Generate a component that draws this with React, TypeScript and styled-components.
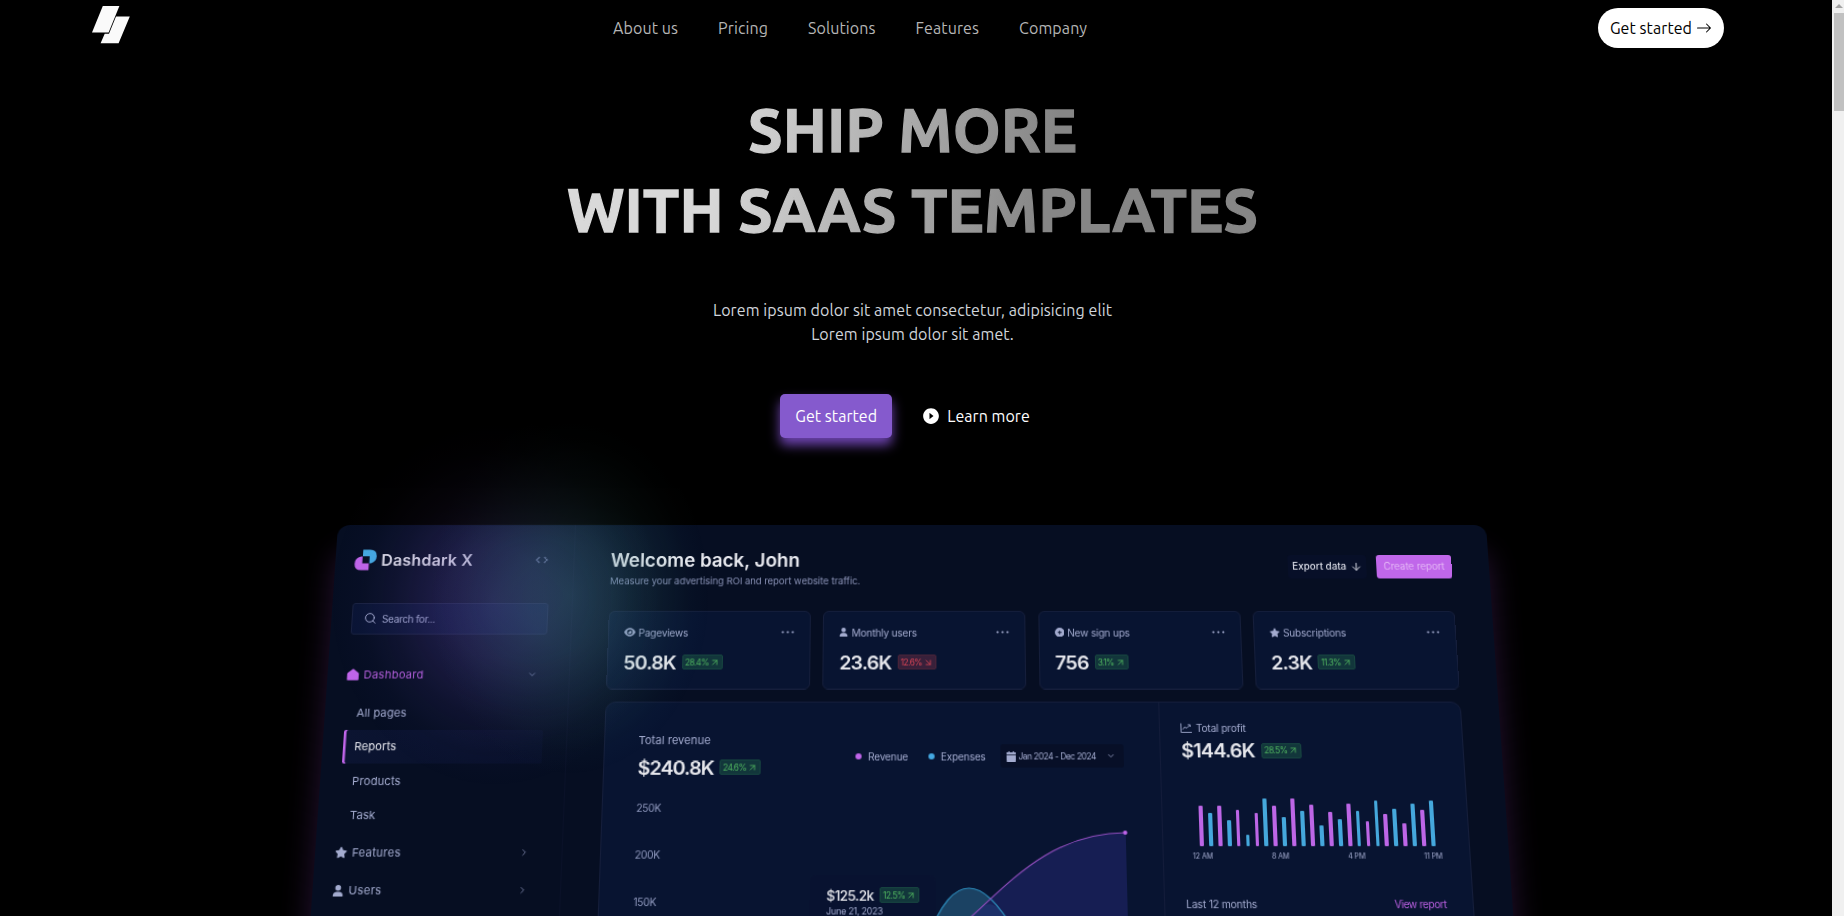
import React from 'react';
import styled, { createGlobalStyle, css } from 'styled-components';
import { BsArrowRight } from 'react-icons/bs';
import { AiFillPlayCircle } from 'react-icons/ai';
import {
  FaStar,
  FaUser,
  FaEye,
  FaCirclePlus,
} from 'react-icons/fa6';
import { Search, ChevronDown, ChevronRight, ArrowDown, ArrowUpRight, ArrowDownRight } from 'lucide-react';

const GlobalStyle = createGlobalStyle`
  * { box-sizing: border-box; }
  html, body { margin: 0; background: #000; overflow: hidden; }
  body { font-family: Ubuntu, "Noto Sans", sans-serif; font-size: 16px; line-height: 24px; color: #fff; }
  h1, h2, p { margin: 0; }
  svg { display: block; flex: none; }
`;

const Screen = styled.div`
  display: flex;
  height: 916px;
  overflow: hidden;
`;

const Page = styled.div`
  position: relative;
  width: 1832px;
  height: 916px;
  overflow: hidden;
  background: #000;
`;

const ScrollTrack = styled.div`
  flex: 1;
  display: flex;
  flex-direction: column;
  align-items: flex-end;
  background: #f0f0f0;
`;

const ScrollArrow = styled.svg`
  margin: 4px 1px 3px 0;
`;

const ScrollThumb = styled.div`
  width: 10px;
  height: 98px;
  margin-top: 1px;
  background: #c1c1c1;
`;

/* ---------- navigation ---------- */

const Nav = styled.nav`
  display: grid;
  grid-template-columns: 521px 1fr auto;
  align-items: center;
  height: 56px;
  padding: 0 108px 0 92px;
`;

const LogoMark = styled.svg`
  margin-top: -7px;
`;

const NavLinks = styled.div`
  display: flex;
  gap: 40px;
  color: #b5b5b5;
  letter-spacing: 0.1px;
`;

const PillButton = styled.button`
  display: flex;
  align-items: center;
  justify-content: center;
  gap: 4px;
  width: 126px;
  height: 40px;
  padding: 0;
  border: 0;
  border-radius: 20px;
  background: #fff;
  color: #000;
  font: inherit;
  letter-spacing: 0.07px;
  white-space: nowrap;
`;

/* ---------- hero ---------- */

const Hero = styled.header`
  display: flex;
  flex-direction: column;
  align-items: center;
  padding: 34px 7px 0 0;
  text-align: center;
`;

const Headline = styled.h1`
  font-size: 61px;
  font-weight: 700;
  line-height: 80px;
  background: linear-gradient(100deg, #d9d9d9 22%, #868686 69%);
  background-clip: text;
  -webkit-background-clip: text;
  -webkit-text-stroke: 1.3px transparent;
  color: transparent;
`;

const Lead = styled.p`
  margin-top: 48px;
  color: #d1d5db;
  letter-spacing: 0.075px;
`;

const Actions = styled.div`
  display: flex;
  align-items: center;
  gap: 30px;
  margin: 48px 0 0 -15px;
  letter-spacing: 0.05px;
`;

const PrimaryButton = styled.button`
  width: 112px;
  height: 44px;
  padding: 0;
  border: 0;
  border-radius: 5px;
  background: #855acd;
  color: #fff;
  font: inherit;
  letter-spacing: inherit;
  box-shadow: 0 7px 12px #8a55dccc;
`;

const LearnMore = styled.span`
  display: flex;
  align-items: center;
  gap: 7px;
`;

/* ---------- tilted dashboard ---------- */

const Stage = styled.section`
  width: 1148px;
  height: 391px;
  margin: 87px 0 0 338px;
`;

const Board = styled.div`
  display: flex;
  width: 1148px;
  height: 900px;
  border-radius: 12px;
  background: #060e22;
  box-shadow: 0 28px 30px #5e2d8066;
  color: #a3abcf;
  font-family: Inter, "Noto Sans", sans-serif;
  font-size: 11px;
  line-height: 14px;
  transform: perspective(2200px) rotateX(15deg);
  transform-origin: 50% 0;
`;

const Sidebar = styled.aside`
  width: 238px;
  padding: 23.5px 23px 0 20px;
  border-right: 1px solid #0a1128;
  border-radius: 12px 0 0 0;
`;

const BrandRow = styled.div`
  display: flex;
  align-items: center;
  height: 24px;
  margin: 0 2px 0 -1px;
`;

const BrandName = styled.span`
  flex: 1;
  margin-left: 4.5px;
  color: #dcdde6;
  font-size: 16px;
  font-weight: 600;
  letter-spacing: 0.18px;
`;

const SearchBox = styled.div`
  display: flex;
  align-items: center;
  gap: 5px;
  height: 32.5px;
  margin-top: 32px;
  padding-left: 11px;
  border: 1px solid #18213f;
  border-radius: 3px;
  background: #091433;
  font-size: 10px;
  letter-spacing: -0.35px;
`;

const MenuRow = styled.div<{ $active?: boolean; $top: number }>`
  display: flex;
  align-items: center;
  gap: 4.5px;
  height: 30px;
  margin-top: ${(p) => p.$top}px;
  margin-left: -1px;
  padding-right: 8.5px;
  color: ${(p) => (p.$active ? '#b55fdc' : '#a3abcf')};
  letter-spacing: 0.25px;

  & > span { flex: 1; }
  & > svg:last-child { color: #7d86ab; }
`;

const SubMenu = styled.div`
  display: flex;
  flex-direction: column;
  gap: 0.8px;
  margin-top: 7px;
`;

const SubItem = styled.div<{ $active?: boolean }>`
  display: flex;
  align-items: center;
  height: 32.4px;
  padding-left: 11px;
  letter-spacing: 0.1px;
  ${(p) =>
    p.$active &&
    css`
      background: linear-gradient(90deg, #0b1431, #081029);
      box-shadow: inset 2.5px 0 0 #c065ea;
      border-radius: 2px;
      color: #e6e7ee;
    `}
`;

const Main = styled.main`
  flex: 1;
  padding: 0 37px 0 36px;
`;

const TopBar = styled.div`
  display: flex;
  justify-content: space-between;
  height: 88px;
`;

const Greeting = styled.div`
  padding-top: 25.5px;
`;

const Title = styled.h2`
  color: #e9eaf0;
  font-size: 18.7px;
  font-weight: 600;
  line-height: 22px;
`;

const Subtitle = styled.p`
  margin-top: 3.5px;
  color: #8890b4;
  font-size: 9.6px;
  letter-spacing: -0.1px;
`;

const TopActions = styled.div`
  display: flex;
  gap: 10px;
  padding-top: 31px;
`;

const BoardButton = styled.span<{ $accent?: boolean }>`
  display: flex;
  align-items: center;
  justify-content: center;
  gap: 3.5px;
  width: ${(p) => (p.$accent ? 75 : 78)}px;
  height: 23.5px;
  border-radius: 3px;
  background: ${(p) => (p.$accent ? '#c067ea' : '#070f28')};
  color: ${(p) => (p.$accent ? '#ecc9f8' : '#dcdee8')};
  font-size: 9.8px;
  font-weight: ${(p) => (p.$accent ? 300 : 500)};
`;

const Cards = styled.div`
  display: grid;
  grid-template-columns: repeat(4, 1fr);
  gap: 12.5px;
`;

const Card = styled.div`
  height: 78.5px;
  padding: 13.5px 15px 0;
  border: 1px solid #151e3b;
  border-radius: 6px;
  background: #081431;
`;

const CardLabel = styled.div`
  display: flex;
  align-items: center;
  gap: 3px;
  font-size: 10px;
  letter-spacing: -0.2px;

  & > span { flex: 1; }
`;

const ValueRow = styled.div<{ $top: number }>`
  display: flex;
  align-items: center;
  gap: 5px;
  height: 24px;
  margin-top: ${(p) => p.$top}px;
`;

const Value = styled.span<{ $small?: boolean }>`
  color: #e6e7ec;
  font-size: ${(p) => (p.$small ? 13.2 : 19.3)}px;
  font-weight: ${(p) => (p.$small ? 500 : 600)};
  letter-spacing: ${(p) => (p.$small ? -0.6 : -0.8)}px;
`;

const Badge = styled.span<{ $down?: boolean }>`
  display: flex;
  align-items: center;
  gap: 1px;
  height: 15px;
  padding: 0 2px;
  margin-left: 1px;
  border: 1px solid ${(p) => (p.$down ? '#4a2338' : '#174640')};
  border-radius: 2px;
  background: ${(p) => (p.$down ? '#38203a' : '#12363b')};
  color: ${(p) => (p.$down ? '#d84456' : '#4fb35f')};
  font-size: 8.3px;
  letter-spacing: -0.55px;
`;

const Overview = styled.div`
  display: grid;
  grid-template-columns: 540.5px 1fr;
  height: 700px;
  margin-top: 12.8px;
  border: 1px solid #151e3b;
  border-radius: 10px;
  background: #081431;
`;

const RevenuePanel = styled.div`
  padding: 30px 34px 0 32.5px;
  border-right: 1px solid #131c3a;
`;

const RevenueHead = styled.div`
  display: flex;
  align-items: center;
`;

const RevenueTotal = styled.div`
  flex: 1;

  & ${Value} { letter-spacing: -1px; }
`;

const Legend = styled.span<{ $color: string }>`
  display: flex;
  align-items: center;
  gap: 6px;
  margin-right: 20px;
  font-size: 9.9px;
  letter-spacing: -0.22px;

  &::before {
    content: '';
    width: 6px;
    height: 6px;
    border-radius: 50%;
    background: ${(p) => p.$color};
  }
`;

const RangePicker = styled.span`
  display: flex;
  align-items: center;
  gap: 2.5px;
  width: 119.5px;
  height: 23px;
  margin: 0 1px 0 -5.5px;
  padding: 0 8px 0 6px;
  border-radius: 3px;
  background: #070f27;
  font-size: 8.4px;
  letter-spacing: -0.5px;

  & > span { flex: 1; white-space: nowrap; }
`;

const Chart = styled.div`
  position: relative;
  display: flex;
  margin-top: 5.7px;
`;

const Axis = styled.div`
  display: flex;
  flex: none;
  flex-direction: column;
  width: 32.5px;
  color: #8f98bd;
  font-size: 10px;
  line-height: 44.85px;
  letter-spacing: -0.35px;
`;

const Tooltip = styled.div`
  position: absolute;
  left: 168px;
  top: 86.5px;
  width: 121px;
  height: 60px;
  padding: 7px 0 0 16.5px;
  border-radius: 5px;
  background: #081230;
  font-size: 8.6px;
  letter-spacing: -0.25px;

  & > div { margin-bottom: -4px; }
`;

const ProfitPanel = styled.div`
  padding: 18px 24px 0 20.5px;
`;

const ProfitLabel = styled(CardLabel)`
  gap: 4px;
`;

const Bars = styled.div`
  display: flex;
  align-items: flex-end;
  justify-content: space-between;
  height: 60px;
  margin: 20.5px 8px 0 15px;
`;

const Bar = styled.div<{ $h: number; $pink: boolean }>`
  width: 3.8px;
  height: ${(p) => p.$h}px;
  border-radius: 1px;
  background: ${(p) => (p.$pink ? '#bd66e6' : '#45a8dc')};
`;

const Hours = styled.div`
  display: flex;
  justify-content: space-between;
  margin: 3.3px 2px 0 8px;
  font-size: 7px;
  letter-spacing: -0.15px;
`;

const ProfitFoot = styled.div`
  display: flex;
  justify-content: space-between;
  margin: 31px 1px 0 0;
  font-size: 10px;
  letter-spacing: -0.2px;
`;

const ViewLink = styled.span`
  color: #b85fdf;
  letter-spacing: -0.45px;
`;

const Glow = styled.div`
  position: absolute;
  left: 300px;
  top: 380px;
  width: 460px;
  height: 440px;
  pointer-events: none;
  background:
    radial-gradient(ellipse 140px 180px at 270px 215px, #3f8f8c4d, #3f8f8c3d 30%, #3f8f8c17 66%, #3f8f8c06 86%, #3f8f8c00),
    radial-gradient(ellipse 165px 185px at 195px 222px, #6a4ab852, #6a4ab840 30%, #6a4ab818 62%, #6a4ab806 82%, #6a4ab800);
  mask-image: linear-gradient(#0006 0, #0008 144px, #000 146px);
`;

const Delta = ({ text, down }: { text: string; down?: boolean }) => (
  <Badge $down={down}>
    {text}
    {down ? <ArrowDownRight size={10} /> : <ArrowUpRight size={10} />}
  </Badge>
);

const Angles = () => (
  <svg width="13" height="8" viewBox="0 0 13 8" fill="none" stroke="#6d7598" strokeWidth="1.2">
    <path d="M4.2 1 1.2 4 4.2 7M8.8 1 11.8 4 8.8 7" />
  </svg>
);

const Dots = () => (
  <svg width="13" height="3" viewBox="0 0 13 3" fill="currentColor">
    <circle cx="1.5" cy="1.5" r="1.1" />
    <circle cx="6.4" cy="1.5" r="1.1" />
    <circle cx="11.3" cy="1.5" r="1.1" />
  </svg>
);

const HomeIcon = () => (
  <svg width="12" height="12" viewBox="0 0 12 12" fill="#c065ea">
    <path d="M6 .3 11.2 4.2Q11.7 4.7 11.7 5.4V11Q11.7 11.8 10.9 11.8H1.1Q.3 11.8.3 11V5.4Q.3 4.7.8 4.2Z" />
  </svg>
);

const CalendarIcon = () => (
  <svg width="9" height="10" viewBox="0 0 9 10" fill="currentColor">
    <path d="M1.8 0h1.2v1h3V0h1.2v1H9v2H0V1h1.8ZM0 3.7h9V9.2Q9 10 8.2 10H.8Q0 10 0 9.2Z" />
  </svg>
);

const TrendIcon = () => (
  <svg width="11" height="10" viewBox="0 0 11 10" fill="none" stroke="currentColor" strokeWidth="0.9">
    <path d="M.5.5V9.4H11M2.2 6.6 4.2 4 6 5.4 9.2 2.2M7.2 1.9H9.5V4" />
  </svg>
);

const BrandIcon = () => (
  <svg width="22" height="22" viewBox="0 0 22 22">
    <path d="M8 .5H15Q21.8.5 21.8 7.3Q21.8 12.6 16.5 14.4H14.8V7.3H8Z" fill="#44a9e2" />
    <path d="M14.4 21.5H7Q.2 21.5.2 14.9Q.2 9 6.3 7.6H7.8V14.6H14.4Z" fill="#c065ea" />
  </svg>
);

const profitBars = [
  39.1, 31.8, 39.1, 24.4, 35.3, 11.3, 31.8, 46.3, 39.1, 27.9, 46.3, 33.7, 40.1,
  19.6, 33.1, 25.7, 40.5, 33.4, 24.1, 44, 31.1, 36, 21.5, 40.8, 34.4, 43.7,
];

const cards = [
  { icon: <FaEye size={11} />, label: 'Pageviews', value: '50.8K', delta: '28.4%', down: false },
  { icon: <FaUser size={9} />, label: 'Monthly users', value: '23.6K', delta: '12.6%', down: true },
  { icon: <FaCirclePlus size={9.5} />, label: 'New sign ups', value: '756', delta: '3.1%', down: false },
  { icon: <FaStar size={10} />, label: 'Subscriptions', value: '2.3K', delta: '11.3%', down: false },
];

export default function App() {
  return (
    <Screen>
      <GlobalStyle />
      <Page>
        <Nav>
          <LogoMark width="38" height="38" viewBox="0 0 38 38" fill="#fafafa">
            <path d="M10.8 0H27.4L16.6 26.6H0Z" />
            <path d="M24 10.4H37.8L26.6 37.2H8.6L12.7 27.7H17Z" />
          </LogoMark>
          <NavLinks>
            <span>About us</span>
            <span>Pricing</span>
            <span>Solutions</span>
            <span>Features</span>
            <span>Company</span>
          </NavLinks>
          <PillButton>
            Get started <BsArrowRight size={16} />
          </PillButton>
        </Nav>

        <Hero>
          <Headline>
            SHIP MORE
            <br />
            WITH SAAS TEMPLATES
          </Headline>
          <Lead>
            Lorem ipsum dolor sit amet consectetur, adipisicing elit
            <br />
            Lorem ipsum dolor sit amet.
          </Lead>
          <Actions>
            <PrimaryButton>Get started</PrimaryButton>
            <LearnMore>
              <AiFillPlayCircle size={18} /> Learn more
            </LearnMore>
          </Actions>
        </Hero>

        <Stage>
          <Board>
            <Sidebar>
              <BrandRow>
                <BrandIcon />
                <BrandName>Dashdark X</BrandName>
                <Angles />
              </BrandRow>
              <SearchBox>
                <Search size={13} strokeWidth={1.8} />
                Search for...
              </SearchBox>
              <MenuRow $active $top={25}>
                <HomeIcon />
                <span>Dashboard</span>
                <ChevronDown size={10} />
              </MenuRow>
              <SubMenu>
                <SubItem>All pages</SubItem>
                <SubItem $active>Reports</SubItem>
                <SubItem>Products</SubItem>
                <SubItem>Task</SubItem>
              </SubMenu>
              <MenuRow $top={5}>
                <FaStar size={12} />
                <span>Features</span>
                <ChevronRight size={10} />
              </MenuRow>
              <MenuRow $top={6.5}>
                <FaUser size={11} />
                <span>Users</span>
                <ChevronRight size={10} />
              </MenuRow>
            </Sidebar>

            <Main>
              <TopBar>
                <Greeting>
                  <Title>Welcome back, John</Title>
                  <Subtitle>Measure your advertising ROI and report website traffic.</Subtitle>
                </Greeting>
                <TopActions>
                  <BoardButton>
                    Export data <ArrowDown size={12} />
                  </BoardButton>
                  <BoardButton $accent>Create report</BoardButton>
                </TopActions>
              </TopBar>

              <Cards>
                {cards.map((c) => (
                  <Card key={c.label}>
                    <CardLabel>
                      {c.icon}
                      <span>{c.label}</span>
                      <Dots />
                    </CardLabel>
                    <ValueRow $top={11}>
                      <Value>{c.value}</Value>
                      <Delta text={c.delta} down={c.down} />
                    </ValueRow>
                  </Card>
                ))}
              </Cards>

              <Overview>
                <RevenuePanel>
                  <RevenueHead>
                    <RevenueTotal>
                      Total revenue
                      <ValueRow $top={7.4}>
                        <Value>$240.8K</Value>
                        <Delta text="24.6%" />
                      </ValueRow>
                    </RevenueTotal>
                    <Legend $color="#c065ea">Revenue</Legend>
                    <Legend $color="#44a9e2">Expenses</Legend>
                    <RangePicker>
                      <CalendarIcon />
                      <span>Jan 2024 - Dec 2024</span>
                      <ChevronDown size={9} />
                    </RangePicker>
                  </RevenueHead>
                  <Chart>
                    <Axis>
                      <span>250K</span>
                      <span>200K</span>
                      <span>150K</span>
                    </Axis>
                    <svg width="444" height="160" viewBox="0 0 444 160" fill="none">
                      <path d="M247 150C262 112 275 99 288.6 99S315 112 334 142V160H243Z" fill="#1b4263" />
                      <path d="M255 160 291.3 125.4C330 91 370 46.5 440 46V160Z" fill="#181f58" fillOpacity="0.9" />
                      <path d="M297 120C310 108 316 114 334 142V160H262L291 126Z" fill="#223d76" fillOpacity="0.55" />
                      <path d="M247 150C262 112 275 99 288.6 99S315 112 334 142" stroke="#2b86b5" strokeWidth="1.2" />
                      <path d="M255 160 291.3 125.4C330 91 370 46.5 440 46" stroke="#8f4dbb" strokeWidth="1.2" />
                      <circle cx="439.5" cy="46" r="2.1" fill="#c065ea" />
                    </svg>
                    <Tooltip>
                      <ValueRow $top={0}>
                        <Value $small>$125.2k</Value>
                        <Delta text="12.5%" />
                      </ValueRow>
                      June 21, 2023
                    </Tooltip>
                  </Chart>
                </RevenuePanel>

                <ProfitPanel>
                  <ProfitLabel>
                    <TrendIcon />
                    <span>Total profit</span>
                  </ProfitLabel>
                  <ValueRow $top={3}>
                    <Value>$144.6K</Value>
                    <Delta text="28.5%" />
                  </ValueRow>
                  <Bars>
                    {profitBars.map((h, i) => (
                      <Bar key={i} $h={h} $pink={i % 2 === 0} />
                    ))}
                  </Bars>
                  <Hours>
                    <span>12 AM</span>
                    <span>8 AM</span>
                    <span>4 PM</span>
                    <span>11 PM</span>
                  </Hours>
                  <ProfitFoot>
                    <span>Last 12 months</span>
                    <ViewLink>View report</ViewLink>
                  </ProfitFoot>
                </ProfitPanel>
              </Overview>
            </Main>
          </Board>
        </Stage>
        <Glow />
      </Page>
      <ScrollTrack>
        <ScrollArrow width="8" height="5" viewBox="0 0 8 5" fill="#a3a3a3">
          <path d="M4 0 8 4H0Z" />
        </ScrollArrow>
        <ScrollThumb />
      </ScrollTrack>
    </Screen>
  );
}
